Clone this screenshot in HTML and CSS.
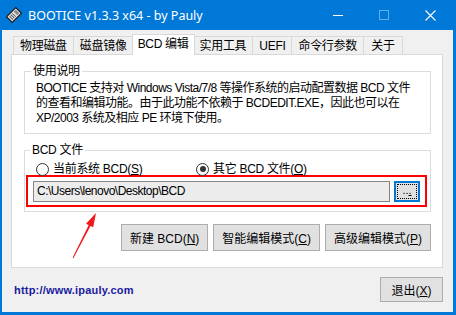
FILE: index.html
```html
<!DOCTYPE html>
<html lang="zh-CN">
<head>
<meta charset="UTF-8" />
<meta name="viewport" content="width=device-width, initial-scale=1.0"/>
<title>BOOTICE v1.3.3 x64 - by Pauly</title>
<link rel="stylesheet" href="styles.css">
</head>
<body>

<div class="window">
    <div class="titlebar">
        <svg class="app-icon" viewBox="0 0 16 16">
            <g transform="rotate(-45 8 8)">
                <rect x="1.5" y="4" width="13" height="8" fill="#e8e8e8" stroke="#1a1a1a" stroke-width="1.2"/>
                <line x1="4" y1="5.5" x2="4" y2="10.5" stroke="#555" stroke-width="1"/>
                <line x1="6" y1="5.5" x2="6" y2="10.5" stroke="#555" stroke-width="1"/>
                <line x1="8" y1="5.5" x2="8" y2="10.5" stroke="#555" stroke-width="1"/>
                <rect x="10" y="5.5" width="3" height="5" fill="#888"/>
            </g>
        </svg>
        <span class="title">BOOTICE v1.3.3 x64 - by Pauly</span>
        <div class="caption">
            <span class="cap-btn">
                <svg width="10" height="10" viewBox="0 0 10 10"><line x1="0" y1="5.5" x2="10" y2="5.5" stroke="#fff" stroke-width="1"/></svg>
            </span>
            <span class="cap-btn disabled">
                <svg width="10" height="10" viewBox="0 0 10 10"><rect x="0.5" y="0.5" width="9" height="9" fill="none" stroke="#fff" stroke-width="1"/></svg>
            </span>
            <span class="cap-btn">
                <svg width="11" height="11" viewBox="0 0 11 11"><path d="M0.5 0.5 L10.5 10.5 M10.5 0.5 L0.5 10.5" stroke="#fff" stroke-width="1.1"/></svg>
            </span>
        </div>
    </div>

    <div class="client">
        <div class="tabs">
            <div class="tab">物理磁盘</div>
            <div class="tab">磁盘镜像</div>
            <div class="tab selected">BCD 编辑</div>
            <div class="tab">实用工具</div>
            <div class="tab">UEFI</div>
            <div class="tab">命令行参数</div>
            <div class="tab">关于</div>
        </div>

        <div class="panel">
            <fieldset class="group intro">
                <legend>使用说明</legend>
                <p>BOOTICE 支持对 Windows Vista/7/8 等操作系统的启动配置数据 BCD 文件<br>的查看和编辑功能。由于此功能不依赖于 BCDEDIT.EXE，因此也可以在<br>XP/2003 系统及相应 PE 环境下使用。</p>
            </fieldset>

            <fieldset class="group bcd-file">
                <legend>BCD 文件</legend>
                <div class="radio-row">
                    <label class="radio"><span class="dot"></span>当前系统 BCD(<u>S</u>)</label>
                    <label class="radio checked"><span class="dot"></span>其它 BCD 文件(<u>O</u>)</label>
                </div>
                <div class="highlight">
                    <div class="path-field">C:\Users\lenovo\Desktop\BCD</div>
                    <button class="browse"><span>..<u>.</u></span></button>
                </div>
            </fieldset>

            <div class="actions">
                <button class="btn">新建 BCD(<u>N</u>)</button>
                <button class="btn">智能编辑模式(<u>C</u>)</button>
                <button class="btn">高级编辑模式(<u>P</u>)</button>
            </div>
        </div>

        <div class="footer">
            <a class="site-link">http://www.ipauly.com</a>
            <button class="btn exit">退出(<u>X</u>)</button>
        </div>
    </div>

    <!-- red annotation arrow drawn over the dialog -->
    <svg class="annotation" width="456" height="315" viewBox="0 0 456 315">
        <polygon points="96,213 93.2,227.3 90.5,226 73.4,258.2 72.6,257.8 88.7,225 86,223.7" fill="#f01818"/>
    </svg>
</div>

</body>
</html>
```

FILE: styles.css
```css
* {
    box-sizing: border-box;
}

body {
    margin: 0;
    font-family: "Liberation Sans", "Noto Sans CJK SC", sans-serif;
    font-size: 12px;
    letter-spacing: -0.3px;
    color: #000;
}

.window {
    position: relative;
    width: 456px;
    height: 315px;
    background: #0078d7;
    padding: 0 3px 3px 2px;
    display: flex;
    flex-direction: column;
}

/* Title bar */
.titlebar {
    height: 30px;
    flex-shrink: 0;
    display: flex;
    align-items: center;
    padding-left: 4px;
    color: #fff;
}

.app-icon {
    width: 16px;
    height: 16px;
    flex-shrink: 0;
}

.title {
    flex: 1;
    margin-left: 6px;
    font-family: "Noto Sans", sans-serif;
    font-size: 12.5px;
    letter-spacing: 0;
    white-space: nowrap;
}

.caption {
    display: flex;
    align-self: stretch;
}

.cap-btn {
    width: 46px;
    display: flex;
    align-items: center;
    justify-content: center;
}

.cap-btn.disabled svg {
    opacity: 0.4;
}

/* Client area */
.client {
    flex: 1;
    background: #f0f0f0;
    padding: 4px 10px 10px 9px;
    display: flex;
    flex-direction: column;
}

.tabs {
    display: flex;
    align-items: flex-end;
    height: 20px;
    margin-left: 2px;
}

.tab {
    position: relative;
    min-width: 40px;
    height: 18px;
    padding: 1px 6px 0;
    line-height: 16px;
    text-align: center;
    background: #f0f0f0;
    border: 1px solid #d9d9d9;
    border-bottom: none;
    white-space: nowrap;
}

.tab + .tab {
    margin-left: -1px;
}

.tab.selected {
    z-index: 1;
    height: 21px;
    padding: 0 5px;
    line-height: 19px;
    margin: 0 -2px -1px -2px;
    background: #fff;
}

.tab.selected + .tab {
    margin-left: 0;
}

.panel {
    height: 214px;
    background: #fff;
    border: 1px solid #d9d9d9;
    padding: 0 11px 0 12px;
    display: flex;
    flex-direction: column;
}

/* Group boxes */
.group {
    margin: 9px 0 0;
    border: 1px solid #dcdcdc;
    min-width: 0;
}

.group legend {
    padding: 0 2px;
    line-height: 14px;
}

.intro {
    padding: 3px 0 7px 6px;
}

.intro p {
    margin: 0;
    padding-left: 5px;
    line-height: 15px;
    letter-spacing: -0.5px;
    white-space: nowrap;
}

.bcd-file {
    padding: 0 3px 4px 1px;
}

.bcd-file legend {
    margin-left: 4px;
}

.radio-row {
    display: flex;
    align-items: center;
    height: 12px;
    margin-top: 6px;
    padding-left: 10px;
}

.radio {
    display: flex;
    align-items: center;
    min-width: 160px;
    line-height: 12px;
    white-space: nowrap;
}

.radio .dot {
    width: 13px;
    height: 13px;
    margin-right: 4px;
    border: 1px solid #333;
    border-radius: 50%;
    background: #fff;
    display: flex;
    align-items: center;
    justify-content: center;
}

.radio.checked .dot::after {
    content: "";
    width: 6px;
    height: 6px;
    border-radius: 50%;
    background: #333;
}

.highlight {
    display: flex;
    gap: 4px;
    border: 2px solid #f00;
    padding: 4px 5px 3px;
}

.path-field {
    flex: 1;
    height: 21px;
    padding-left: 3px;
    line-height: 19px;
    letter-spacing: -0.5px;
    border: 1px solid #858585;
    background: #ececec;
    white-space: nowrap;
}

.browse {
    width: 26px;
    height: 21px;
    padding: 0;
    border: 2px solid #0078d7;
    background: #e1e1e1;
    font: inherit;
    font-size: 11px;
    line-height: 11px;
    outline: 1px dotted #000;
    outline-offset: -4px;
}

.browse span {
    position: relative;
    top: -1px;
}

/* Buttons */
.actions {
    display: flex;
    justify-content: flex-end;
    gap: 5px;
    margin-top: 12px;
}

.btn {
    min-width: 86px;
    height: 27px;
    padding: 0 8px;
    border: 1px solid #adadad;
    background: #e1e1e1;
    font: inherit;
    color: #000;
    white-space: nowrap;
}

.footer {
    display: flex;
    align-items: center;
    justify-content: space-between;
    margin-top: 9px;
}

.site-link {
    padding-left: 3px;
    font-family: "Liberation Sans", Arial, sans-serif;
    font-size: 11px;
    font-weight: bold;
    letter-spacing: 0.2px;
    color: #1a1aa0;
}

.btn.exit {
    min-width: 63px;
    height: 25px;
}

.annotation {
    position: absolute;
    left: 0;
    top: 0;
    pointer-events: none;
}
```
